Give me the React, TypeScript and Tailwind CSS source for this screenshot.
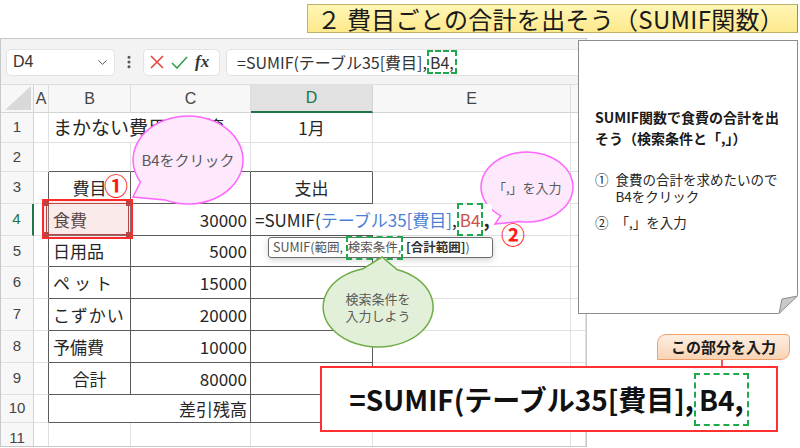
import type { ReactNode } from 'react';
import { ChevronDown, EllipsisVertical } from 'lucide-react';

// 行の高さ（列見出し + 1〜11行）
const ROW_H = 'grid-rows-[28px_30px_29px_32px_32px_31px_32px_32px_32px_32px_28px_32px]';
const COLS = ['A', 'B', 'C', 'D', 'E', ''];

const inTable = (r: number, c: number) => r >= 3 && r <= 10 && c >= 1 && c <= 3;

const cellBorders = (r: number, c: number, last: number) => {
  const right = inTable(r, last) || inTable(r, last + 1) ? 'border-r-[#5c5c5c]' : 'border-r-[#e0e0e0]';
  const bottom = inTable(r, c) || inTable(r + 1, c) ? 'border-b-[#5c5c5c]' : 'border-b-[#e0e0e0]';
  return `border-r border-b ${right} ${bottom}`;
};

const DashBox = ({ children, className = '' }: { children: ReactNode; className?: string }) => (
  <span className={`inline-flex items-center border-2 border-dashed border-[#1eaa4a] ${className}`}>{children}</span>
);

const D4Formula = () => (
  <div className="absolute left-0 top-0 bottom-0 z-10 flex items-center bg-white pl-[4px] pr-[2px] whitespace-nowrap text-[17px]">
    <span>=SUMIF(</span>
    <span className="text-[#4a7fd4]">テーブル35[費目]</span>
    <span>,</span>
    <DashBox className="h-[33px] px-[1px] text-[#d0504d]">B4</DashBox>
    <span className="font-bold text-[19px]">,</span>
  </div>
);

type Cell = { span?: number; text?: ReactNode; cls?: string };

const sheet: Record<number, Record<number, Cell>> = {
  1: { 1: { span: 2, text: 'まかない費用出納簿', cls: 'text-[19px] pl-[4px]' }, 3: { text: '1月', cls: 'justify-center' } },
  3: { 1: { text: '費目', cls: 'justify-center' }, 3: { text: '支出', cls: 'justify-center' } },
  4: { 1: { text: '食費', cls: 'pl-[4px]' }, 2: { text: '30000', cls: 'justify-end pr-[3px]' }, 3: { text: <D4Formula />, cls: 'relative' } },
  5: { 1: { text: '日用品', cls: 'pl-[4px]' }, 2: { text: '5000', cls: 'justify-end pr-[3px]' } },
  6: { 1: { text: 'ペット', cls: 'pl-[4px] tracking-[4px]' }, 2: { text: '15000', cls: 'justify-end pr-[3px]' } },
  7: { 1: { text: 'こずかい', cls: 'pl-[4px] tracking-[1px]' }, 2: { text: '20000', cls: 'justify-end pr-[3px]' } },
  8: { 1: { text: '予備費', cls: 'pl-[4px]' }, 2: { text: '10000', cls: 'justify-end pr-[3px]' } },
  9: { 1: { text: '合計', cls: 'justify-center' }, 2: { text: '80000', cls: 'justify-end pr-[3px]' } },
  10: { 1: { span: 2, text: '差引残高', cls: 'justify-end pr-[3px]' } },
};

const Sheet = () => {
  const rows = Array.from({ length: 11 }, (_, i) => i + 1);
  return (
    <div className={`grid grid-cols-[33px_15px_82px_120px_122px_198px_1fr] ${ROW_H} text-[#262626] text-[17px]`}>
      {/* 列見出し */}
      <div className="relative bg-[#f7f7f7] border-r border-b border-[#d4d4d4]">
        <svg className="absolute right-[2px] bottom-[2px]" width="26" height="24" viewBox="0 0 26 24">
          <polygon points="26,0 26,24 0,24" fill="#d9d9d9" />
        </svg>
      </div>
      {COLS.map((c) => (
        <div
          key={c || 'F'}
          className={
            c === 'D'
              ? 'flex items-center justify-center bg-[#e1e1e1] border-r border-r-[#d4d4d4] border-b-2 border-b-[#217346] text-[#217346] text-[16px] font-[Liberation_Sans,sans-serif]'
              : 'flex items-center justify-center bg-[#f7f7f7] border-r border-r-[#dcdcdc] border-b border-b-[#d4d4d4] text-[#444] text-[16px] font-[Liberation_Sans,sans-serif]'
          }
        >
          {c}
        </div>
      ))}
      {rows.map((r) => {
        const out: ReactNode[] = [
          <div
            key={`h${r}`}
            className={
              r === 4
                ? 'flex items-center justify-center bg-[#f7f7f7] border-r-2 border-r-[#217346] border-b border-b-[#e0e0e0] text-[#217346] text-[15px] font-[Liberation_Sans,sans-serif]'
                : 'flex items-center justify-center bg-[#f7f7f7] border-r border-r-[#d4d4d4] border-b border-b-[#e0e0e0] text-[#444] text-[15px] font-[Liberation_Sans,sans-serif]'
            }
          >
            {r}
          </div>,
        ];
        let c = 0;
        while (c < 6) {
          const def = sheet[r]?.[c];
          const span = def?.span ?? 1;
          out.push(
            <div
              key={`${r}-${c}`}
              className={`${cellBorders(r, c, c + span - 1)} ${span === 2 ? 'col-span-2' : ''} flex items-center whitespace-nowrap ${def?.cls ?? ''}`}
            >
              {def?.text}
            </div>,
          );
          c += span;
        }
        return out;
      })}
    </div>
  );
};

const FormulaBar = () => (
  <div className="h-[46px] bg-[#f3f3f3] flex items-center gap-[6px] pl-[5px] pt-[1px] border-b border-[#dedede]">
    <div className="w-[109px] h-[27px] bg-white rounded-[5px] border border-[#e3e3e3] flex items-center justify-between pl-[6px] pr-[4px] text-[16px] text-[#333] font-[Liberation_Sans,sans-serif]">
      D4
      <ChevronDown size={15} strokeWidth={1.6} className="text-[#555]" />
    </div>
    <EllipsisVertical size={16} strokeWidth={2.6} className="text-[#555]" />
    <div className="w-[77px] h-[27px] bg-white rounded-[5px] border border-[#e3e3e3] flex items-center gap-[7px] pl-[6px]">
      <svg width="14" height="14" viewBox="0 0 14 14">
        <path d="M1 1 L13 13 M13 1 L1 13" stroke="#e2483f" strokeWidth="1.6" fill="none" />
      </svg>
      <svg width="17" height="13" viewBox="0 0 17 13">
        <path d="M1 7 L6 12 L16 1" stroke="#33a04e" strokeWidth="1.6" fill="none" />
      </svg>
      <span className="font-['Liberation_Serif',serif] italic font-bold text-[17px] text-[#333]">fx</span>
    </div>
    <div className="flex-1 h-[27px] bg-white rounded-l-[5px] border border-[#e3e3e3] flex items-center pl-[10px] text-[16px] text-[#333] whitespace-nowrap">
      =SUMIF(テーブル35[費目],
      <DashBox className="h-[24px] px-[1px]">B4,</DashBox>
    </div>
  </div>
);

const Bubble = ({
  box, d, fill, stroke, children, textCls,
}: { box: string; d: string; fill: string; stroke: string; children: ReactNode; textCls: string }) => (
  <div className={`absolute ${box}`}>
    <svg className="absolute inset-0 w-full h-full overflow-visible">
      <path d={d} fill={fill} stroke={stroke} strokeWidth="1.5" />
    </svg>
    <div className={`absolute text-center text-[#595959] whitespace-nowrap leading-[17px] ${textCls}`}>{children}</div>
  </div>
);

export default function App() {
  return (
    <div className="relative w-[800px] h-[448px] bg-white overflow-hidden font-['Noto_Sans_CJK_JP','Noto_Sans',sans-serif]">
      {/* タイトル */}
      <div className="h-[38px] flex justify-end pt-[4px] pr-[2px]">
        <div className="w-[491px] h-[29px] bg-gradient-to-b from-[#fff6b5] to-[#fde98c] border border-[#bfb06a] border-r-[#8a8a8a] flex items-center pl-[9px] text-[24px] text-[#1a1a1a] whitespace-nowrap leading-none tracking-[0.3px]">
          ２ 費目ごとの合計を出そう（SUMIF関数）
        </div>
      </div>

      {/* Excel 画面 */}
      <div className="w-[587px] h-[409px] border border-[#c8c8c8] overflow-hidden">
        <FormulaBar />
        <Sheet />
      </div>

      {/* B4 の選択枠 */}
      <div className="absolute left-[42px] top-[199px] w-[91px] h-[40px] border-2 border-[#ff2a2a] bg-[rgba(235,170,170,0.25)]">
        <div className="absolute inset-[2px] border border-[#b84444]" />
        <div className="absolute left-[0px] top-[0px] w-[5px] h-[5px] bg-[#b84444]" />
        <div className="absolute right-[0px] top-[0px] w-[5px] h-[5px] bg-[#b84444]" />
        <div className="absolute left-[0px] bottom-[0px] w-[5px] h-[5px] bg-[#b84444]" />
        <div className="absolute right-[0px] bottom-[0px] w-[5px] h-[5px] bg-[#b84444]" />
      </div>
      <div className="absolute left-[104px] top-[173px] text-[24px] leading-none font-bold text-[#ff1a1a]">①</div>
      <div className="absolute left-[501px] top-[222px] text-[24px] leading-none font-bold text-[#ff1a1a]">②</div>

      {/* 数式のヒント */}
      <div className="absolute left-[268px] top-[237px] w-[225px] h-[21px] bg-white border border-[#6b6b6b] rounded-[3px] shadow-[0_2px_6px_rgba(0,0,0,0.18)] flex items-center pl-[4px] text-[12.5px] text-[#555] whitespace-nowrap">
        SUMIF(範囲,&nbsp;
        <DashBox className="h-[24px] -my-[3px]">検索条件,</DashBox>
        &nbsp;<span className="font-bold text-[#333]">[合計範囲]</span>)
      </div>

      {/* 吹き出し */}
      <Bubble
        box="left-[125px] top-[110px] w-[125px] h-[100px]"
        d="M 39.8 89.9 L 8 87 L 15.4 72 A 55 44 0 1 1 39.8 89.9 Z"
        fill="#fde8fc"
        stroke="#ff66ff"
        textCls="left-[13px] top-[41px] w-[100px] text-[15px]"
      >
        B4をクリック
      </Bubble>
      <Bubble
        box="left-[475px] top-[148px] w-[105px] h-[80px]"
        d="M 44 73.5 L 20 76 L 25.6 67.7 A 46 35 0 1 1 44 73.5 Z"
        fill="#fde8fc"
        stroke="#ff66ff"
        textCls="left-[18px] top-[31px] w-[68px] text-[13px]"
      >
        「,」を入力
      </Bubble>
      <Bubble
        box="left-[318px] top-[252px] w-[120px] h-[100px]"
        d="M 45.8 16.4 L 64 5 L 78.8 17.4 A 55 40 0 1 1 45.8 16.4 Z"
        fill="#e2efd9"
        stroke="#70ad47"
        textCls="left-[22px] top-[38px] w-[76px] text-[13px]"
      >
        検索条件を<br />入力しよう
      </Bubble>

      {/* 説明メモ */}
      <div className="absolute left-[578px] top-[40px] w-[220px] h-[274px] bg-white border border-[#8c8c8c] pl-[16px] pt-[66px] text-[#1a1a1a]">
        <div className="text-[14px] font-bold leading-[21px] whitespace-nowrap">
          SUMIF関数で食費の合計を出<br />そう（検索条件と「,」）
        </div>
        <div className="mt-[22px] text-[13.5px] leading-[17px] whitespace-nowrap text-[#262626]">
          <div className="flex gap-[7px]">
            <span>①</span>
            <span>食費の合計を求めたいので<br />B4をクリック</span>
          </div>
          <div className="flex gap-[7px] mt-[9px]">
            <span>②</span>
            <span>「,」を入力</span>
          </div>
        </div>
        <svg className="absolute right-[-1px] bottom-[-1px]" width="20" height="19" viewBox="0 0 20 19">
          <polygon points="20,0 20,19 0,19" fill="white" />
          <polygon points="1,18.5 19.5,1 4,4" fill="#c9c9c9" stroke="#8c8c8c" strokeWidth="1" />
        </svg>
      </div>

      {/* この部分を入力 */}
      <div className="absolute left-[657px] top-[334px] w-[133px] h-[26px] rounded-tl-[9px] rounded-tr-[4px] rounded-br-[9px] bg-gradient-to-b from-[#fdeee2] to-[#f9d3b4] border border-[#f2a06a] flex items-center justify-center text-[15px] font-bold text-[#1a1a1a] whitespace-nowrap">
        この部分を入力
      </div>
      <svg className="absolute left-[717px] top-[360px]" width="10" height="24" viewBox="0 0 10 24">
        <path d="M5 0 V18" stroke="#ee1c1c" strokeWidth="1.5" />
        <polygon points="1,16 9,16 5,23" fill="#ee1c1c" />
      </svg>

      {/* 入力する数式 */}
      <div className="absolute left-[320px] top-[366px] w-[458px] h-[66px] bg-white border-2 border-[#ff3030] flex items-center justify-center text-[28px] font-bold text-[#111] whitespace-nowrap">
        =SUMIF(テーブル35[費目],
        <DashBox className="h-[53px] px-[3px]">B4,</DashBox>
      </div>
    </div>
  );
}
